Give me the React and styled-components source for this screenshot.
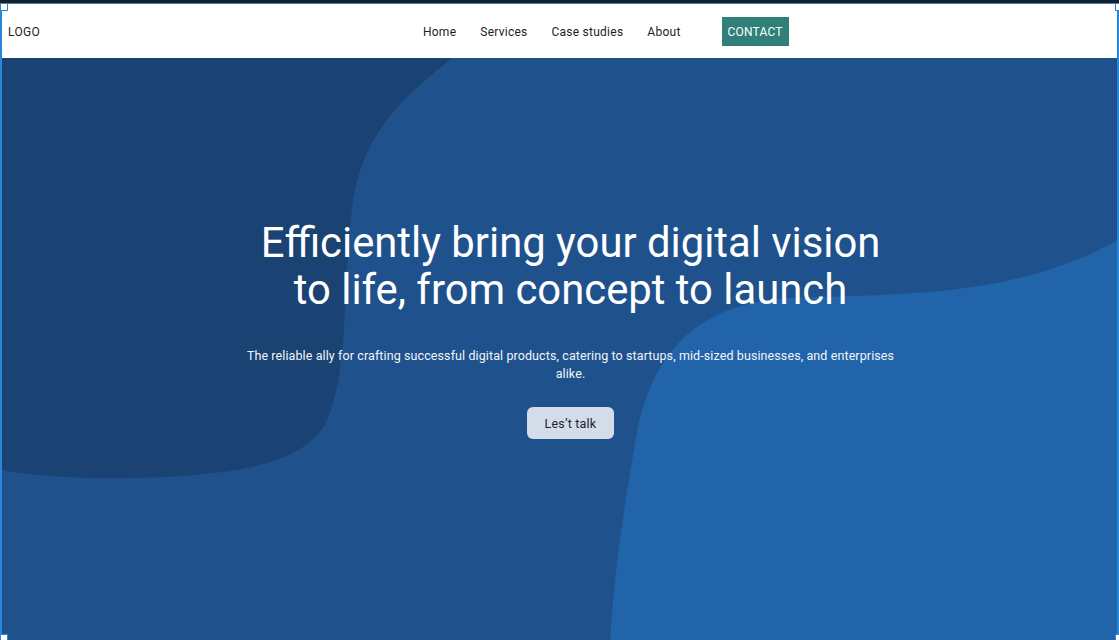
import React from 'react'
import styled, { createGlobalStyle } from 'styled-components'

const GlobalStyle = createGlobalStyle`
  html, body {
    margin: 0;
    padding: 0;
    background: #1e1e1e;
    font-family: Roboto, "Liberation Sans", sans-serif;
  }
`

const Frame = styled.div`
  position: relative;
  width: 1119px;
  height: 640px;
  box-sizing: border-box;
  border-top: 3px solid #1e1e1e;
  overflow: hidden;
`

const Canvas = styled.div`
  display: flex;
  flex-direction: column;
  height: 100%;
  box-sizing: border-box;
  border: 2px solid #2a86d8;
  border-top-width: 1px;
  border-bottom: none;
`

const Handle = styled.span`
  position: absolute;
  width: 6px;
  height: 6px;
  background: #fff;
  border: 1px solid #2a86d8;
  ${(p) => (p.$top ? 'top: 0;' : 'bottom: -2px;')}
  ${(p) => (p.$left ? 'left: 0;' : 'right: -4px;')}
`

const Header = styled.header`
  display: flex;
  align-items: center;
  height: 54px;
  padding: 1px 6px 0;
  box-sizing: border-box;
  background: #fff;
  flex-shrink: 0;
`

const Logo = styled.div`
  font-size: 12px;
  color: #1d1d1d;
  letter-spacing: 0.3px;
`

const Nav = styled.nav`
  display: flex;
  align-items: center;
  margin-left: 383px;
  gap: 24px;
`

const NavLink = styled.a`
  font-size: 12px;
  color: #1d1d1d;
  letter-spacing: 0.25px;
  text-decoration: none;
  cursor: pointer;
`

const ContactButton = styled.button`
  margin-left: 17px;
  height: 29px;
  padding: 0 6px;
  border: none;
  background: #2e8079;
  color: #fff;
  font-family: inherit;
  font-size: 12px;
  letter-spacing: 0.2px;
`

const Hero = styled.section`
  position: relative;
  flex: 1;
  background: #1f528d;
  overflow: hidden;
`

const Blobs = styled.svg`
  position: absolute;
  inset: 0;
  width: 100%;
  height: 100%;
`

const Content = styled.div`
  position: relative;
  display: flex;
  flex-direction: column;
  align-items: center;
  padding-top: 161px;
  padding-left: 22px;
  color: #fff;
  text-align: center;
`

const Title = styled.h1`
  margin: 0;
  font-size: 41.8px;
  font-weight: 400;
  line-height: 47px;
  max-width: 640px;
`

const Subtitle = styled.p`
  margin: 34px 0 0;
  font-size: 12.5px;
  line-height: 18px;
  letter-spacing: 0.1px;
  max-width: 660px;
  color: #f2f5fa;
`

const TalkButton = styled.button`
  margin-top: 24px;
  height: 32px;
  padding: 0 18px;
  border: none;
  border-radius: 6px;
  background: #d3dce8;
  color: #1c2330;
  font-family: inherit;
  font-size: 12.5px;
  letter-spacing: 0.2px;
`

export default function App() {
  return (
    <>
      <GlobalStyle />
      <Frame>
        <Canvas>
          <Header>
            <Logo>LOGO</Logo>
            <Nav>
              <NavLink>Home</NavLink>
              <NavLink>Services</NavLink>
              <NavLink>Case studies</NavLink>
              <NavLink>About</NavLink>
              <ContactButton>CONTACT</ContactButton>
            </Nav>
          </Header>
          <Hero>
            <Blobs viewBox="0 0 1115 582" preserveAspectRatio="none">
              <path
                d="M0,0 L450,0 C400,40 360,75 350,150 C340,230 348,320 322,368 C295,410 220,420 100,420 C60,420 20,416 0,412 Z"
                fill="#1a4272"
              />
              <path
                d="M1117,182 C1010,240 900,236 790,240 C700,244 650,290 634,380 C618,470 610,540 608,590 L1117,590 Z"
                fill="#2264a9"
              />
            </Blobs>
            <Content>
              <Title>Efficiently bring your digital vision to life, from concept to launch</Title>
              <Subtitle>
                The reliable ally for crafting successful digital products, catering to startups, mid-sized businesses, and enterprises alike.
              </Subtitle>
              <TalkButton>Les’t talk</TalkButton>
            </Content>
          </Hero>
        </Canvas>
        <Handle $top $left />
        <Handle $top />
        <Handle $left />
        <Handle />
      </Frame>
    </>
  )
}
